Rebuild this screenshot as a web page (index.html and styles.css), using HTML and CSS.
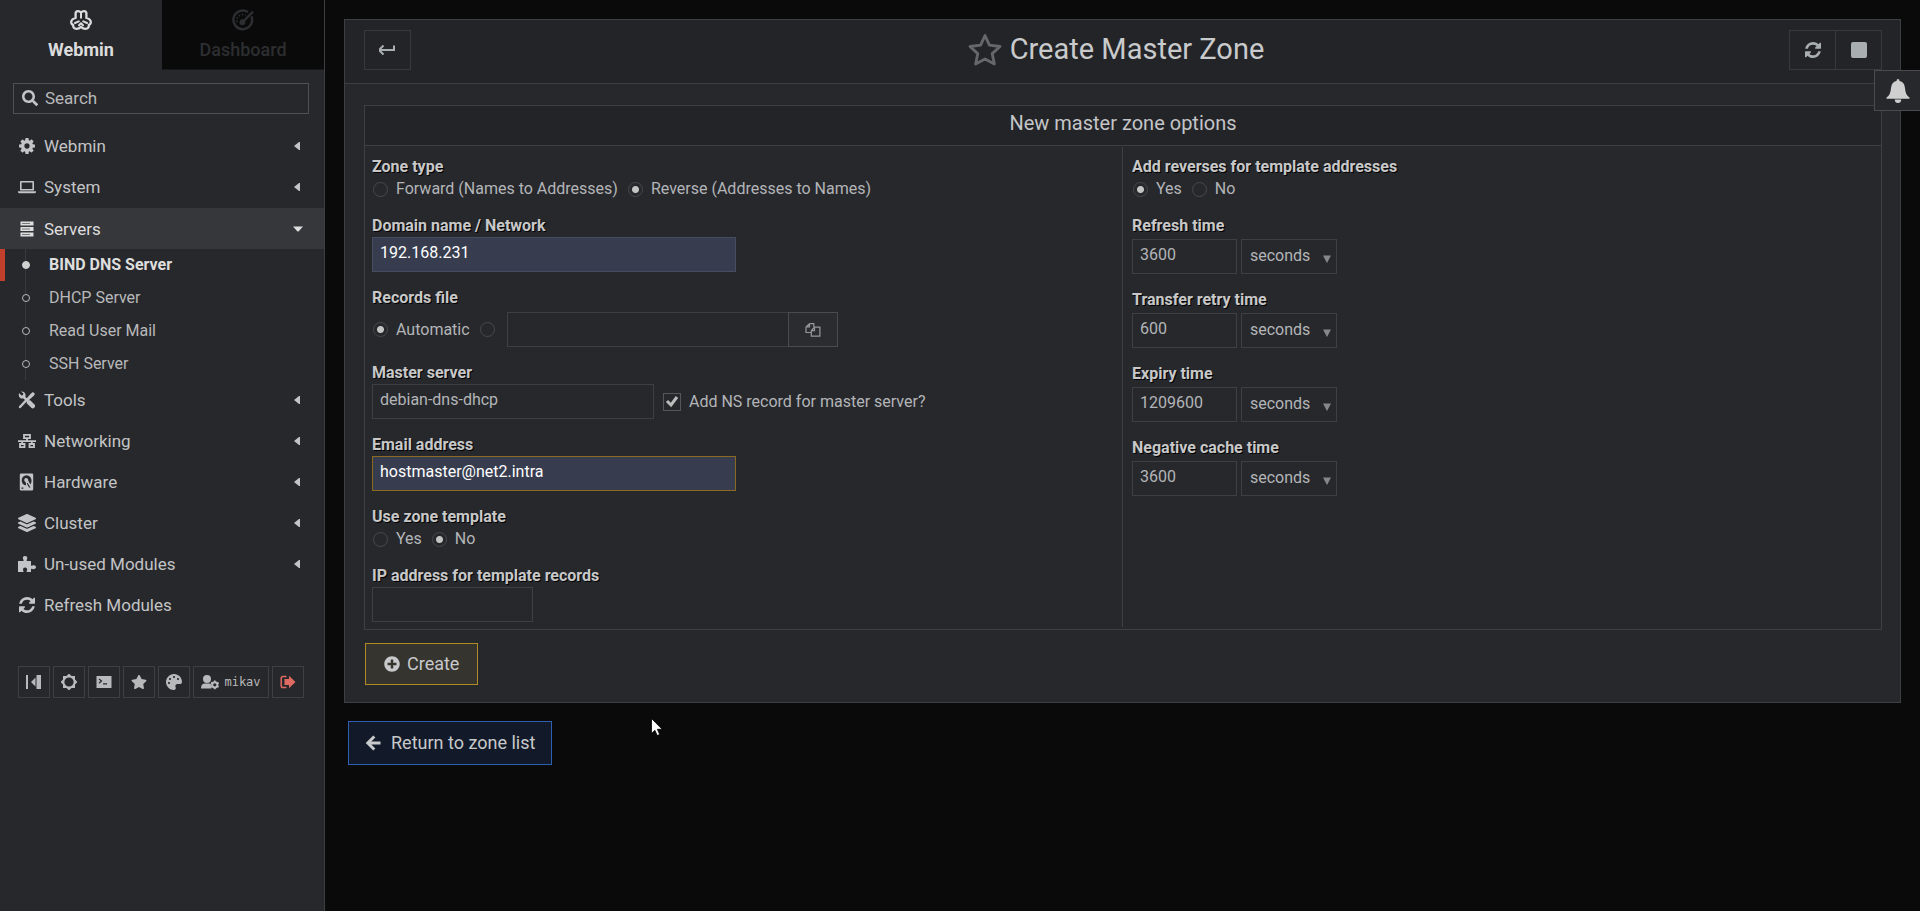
FILE: index.html
```html
<!DOCTYPE html>
<html lang="en">
<head>
<meta charset="utf-8">
<title>Create Master Zone</title>
<link rel="stylesheet" href="styles.css">
</head>
<body>
<svg class="defs" aria-hidden="true">
  <symbol id="refresh" viewBox="0 128 1536 1536"><path d="M1511 1056q0 5-1 7-64 268-268 434.500t-478 166.500q-146 0-282.500-55t-243.500-157l-129 129q-19 19-45 19t-45-19-19-45v-448q0-26 19-45t45-19h448q26 0 45 19t19 45-19 45l-137 137q71 66 161 102t187 36q134 0 250-65t186-179q11-17 53-117 8-23 30-23h192q13 0 22.500 9.500t9.500 22.500zm25-800v448q0 26-19 45t-45 19h-448q-26 0-45-19t-19-45 19-45l138-138q-148-137-349-137-134 0-250 65t-186 179q-11 17-53 117-8 23-30 23h-199q-13 0-22.500-9.500t-9.500-22.500v-7q65-268 270-434.500t480-166.500q146 0 284 55.500t245 156.500l130-129q19-19 45-19t45 19 19 45z"/></symbol>
  <symbol id="caret" viewBox="0 0 6 10"><path d="M6 1v8H5L0 5l5-4z"/></symbol>
  <symbol id="down" viewBox="0 0 10 10"><path d="M1 1.500h8L5 9z"/></symbol>
  <symbol id="star" viewBox="0 0 576 512"><path d="M259.300 17.800L194 150.200 47.900 171.500c-26.200 3.800-36.700 36.100-17.700 54.600l105.700 103-25 145.500c-4.500 26.300 23.200 46 46.400 33.700L288 439.600l130.700 68.700c23.200 12.200 50.900-7.400 46.400-33.700l-25-145.500 105.700-103c19-18.500 8.500-50.800-17.700-54.600L382 150.200 316.700 17.800c-11.700-23.600-45.600-23.900-57.400 0z"/></symbol>
</svg>
<div class="app">
  <aside class="sidebar">
    <nav class="tabs">
      <a class="tab tab-active" href="#">
        <svg class="tab-icon" viewBox="0 0 22 20"><g fill="none" stroke="currentColor" stroke-width="2.300" stroke-linecap="round" stroke-linejoin="round"><path d="M8 1.200Q5.600 1.200 5.600 3.600V8Q1.200 9 1.200 12.300q0 2 2 2.600-.4 3.900 3.400 3.900 2.400 0 4.400-1.900 2 1.900 4.400 1.900 3.800 0 3.400-3.900 2-.6 2-2.600 0-3.300-4.400-4.300V3.600q0-2.400-2.400-2.400-1.800 0-3 1.300-1.200-1.300-3-1.300z"/><path stroke-width="2" d="M11 3v4.800M5 13l3.800-1.600M17 13l-3.800-1.600M9 15.200l2-2 2 2"/></g></svg>
        <span>Webmin</span>
      </a>
      <a class="tab" href="#">
        <svg class="tab-icon" viewBox="0 0 20 20"><g fill="none" stroke="currentColor"><path stroke-width="2.200" d="M14.500 2.800A8.500 8.500 0 1 0 17.600 6.500"/><path stroke-width="2.200" stroke-linecap="round" d="M18.500 3 10 11.500"/><path stroke-width="1.400" stroke-dasharray="1.500 1.500" d="M4.500 12a5.500 5.500 0 0 1 8-6.300"/></g><circle cx="9.500" cy="12" r="2.600" fill="currentColor"/></svg>
        <span>Dashboard</span>
      </a>
    </nav>
    <label class="search">
      <svg class="ic16" viewBox="0 0 512 512"><path d="M505 442.700L405.300 343c-4.500-4.500-10.600-7-17-7H372c27.600-35.300 44-79.700 44-128C416 93.100 322.900 0 208 0S0 93.100 0 208s93.100 208 208 208c48.300 0 92.700-16.400 128-44v16.300c0 6.400 2.500 12.500 7 17l99.700 99.700c9.400 9.400 24.600 9.400 33.900 0l28.300-28.300c9.400-9.400 9.400-24.600.1-34zM208 336c-70.700 0-128-57.200-128-128 0-70.700 57.200-128 128-128 70.700 0 128 57.200 128 128 0 70.700-57.200 128-128 128z"/></svg>
      <input class="search-input" type="text" placeholder="Search" aria-label="Search">
    </label>
    <nav class="menu">
      <a class="menu-row" href="#"><svg class="mi" viewBox="-100 50 1736 1692"><path fill-rule="evenodd" d="M1024 896q0-106-75-181t-181-75-181 75-75 181 75 181 181 75 181-75 75-181zm512-109v222q0 12-8 23t-20 13l-185 28q-19 54-39 91 35 50 107 138 10 12 10 25t-9 23q-27 37-99 108t-94 71q-12 0-26-9l-138-108q-44 23-91 38-16 136-29 186-7 28-36 28h-222q-14 0-24.500-8.500t-11.500-21.500l-28-184q-49-16-90-37l-141 107q-10 9-25 9-14 0-25-11-126-114-165-168-7-10-7-23 0-12 8-23 15-21 51-66.500t54-70.500q-27-50-41-99l-183-27q-13-2-21-12.500t-8-23.500v-222q0-12 8-23t19-13l186-28q14-46 39-92-40-57-107-138-10-12-10-24 0-10 9-23 26-36 98.500-107.500t94.500-71.500q13 0 26 10l138 107q44-23 91-38 16-136 29-186 7-28 36-28h222q14 0 24.500 8.500t11.500 21.500l28 184q49 16 90 37l142-107q9-9 24-9 13 0 25 10 129 119 165 170 7 8 7 22 0 12-8 23-15 21-51 66.500t-54 70.500q26 50 41 98l183 28q13 2 21 12.500t8 23.500z"/></svg><span>Webmin</span><svg class="caret"><use href="#caret"/></svg></a>
      <a class="menu-row" href="#"><svg class="mi" viewBox="0 0 18 18"><path fill-rule="evenodd" d="M3 3h12q1 0 1 1v8.500H2V4q0-1 1-1zm.600 1.600v6.400h10.800V4.600zM0 13.200h18v.8q0 1.200-1.500 1.200h-15Q0 15.200 0 14z"/></svg><span>System</span><svg class="caret"><use href="#caret"/></svg></a>
      <a class="menu-row menu-open" href="#"><svg class="mi" viewBox="0 0 18 18"><path d="M2.500 1.500h13v4h-13zM2.500 7h13v4h-13zM2.500 12.500h13v4h-13z"/><path stroke="#77787b" d="M4 3.500h8M4 9h8M4 14.500h8"/></svg><span>Servers</span><svg class="caret-down" viewBox="0 0 10 6"><path d="M0 .5h10L5.500 5.500h-1z"/></svg></a>
      <ul class="submenu">
        <li><a class="sub sub-active" href="#"><i class="dot"></i>BIND DNS Server</a></li>
        <li><a class="sub" href="#"><i class="dot"></i>DHCP Server</a></li>
        <li><a class="sub" href="#"><i class="dot"></i>Read User Mail</a></li>
        <li><a class="sub" href="#"><i class="dot"></i>SSH Server</a></li>
      </ul>
      <a class="menu-row" href="#"><svg class="mi" viewBox="0 0 18 18"><path fill="none" stroke="currentColor" stroke-width="2.400" stroke-linecap="round" d="M2 16l6-6.500M12 6l3-3"/><path d="M13 2.500 15 1l2 2-1.500 2-5 4.500-2-2zM1 2l2.500 2.500L5 4l.4-1.500L3 .6Q6.500 0 7.500 3.500V6l3.500 3.500 1-.5 5 5q.5 2-1 3-1.500.8-2.500 0l-5-5L9 11 5.500 7.500H3Q0 6 1 2z"/></svg><span>Tools</span><svg class="caret"><use href="#caret"/></svg></a>
      <a class="menu-row" href="#"><svg class="mi" viewBox="0 0 18 18"><path fill="none" stroke="currentColor" stroke-width="1.800" d="M6 2.900h6v3.300H6zM2 12h4.500v3.200H2zM11.500 12H16v3.200h-4.500zM0 9.200h18M9 6v3M4.200 9v3M13.800 9v3"/></svg><span>Networking</span><svg class="caret"><use href="#caret"/></svg></a>
      <a class="menu-row" href="#"><svg class="mi" viewBox="0 0 18 18"><path fill-rule="evenodd" d="M3 .5h11q1.200 0 1.200 1.200v14.600q0 1.200-1.200 1.200H3q-1.200 0-1.200-1.200V1.700Q1.800.5 3 .5zm5.500 1.700a5 5 0 0 0-4.800 5c0 3 2 5 4.500 5l-.6-3.200a2 2 0 1 1 2.600-1.500l2.200 4a5.200 5.200 0 0 0 1.100-4.200 5 5 0 0 0-5-5.100zM3.400 14.500v1.200h2v-1.200zm5.300-4.200 2.300 4.200h1.500L9.700 10z"/></svg><span>Hardware</span><svg class="caret"><use href="#caret"/></svg></a>
      <a class="menu-row" href="#"><svg class="mi" viewBox="0 0 512 512"><path d="M12.410 148.020l232.940 105.670c6.800 3.090 14.490 3.090 21.290 0l232.940-105.670c16.550-7.510 16.550-32.520 0-40.030L266.650 2.310a25.607 25.607 0 0 0-21.290 0L12.410 107.980c-16.550 7.510-16.550 32.530 0 40.040zm487.180 88.280l-58.090-26.330-161.640 73.270c-7.560 3.430-15.590 5.170-23.860 5.170s-16.290-1.740-23.860-5.170L70.510 209.970l-58.100 26.330c-16.550 7.500-16.550 32.500 0 40l232.940 105.590c6.800 3.080 14.490 3.080 21.290 0L499.590 276.300c16.550-7.500 16.550-32.500 0-40zm0 127.800l-57.870-26.230-161.860 73.370c-7.560 3.430-15.590 5.170-23.860 5.170s-16.290-1.740-23.860-5.170L70.290 337.870 12.410 364.100c-16.550 7.500-16.550 32.500 0 40l232.940 105.590c6.800 3.080 14.490 3.080 21.290 0L499.590 404.100c16.550-7.500 16.550-32.500 0-40z"/></svg><span>Cluster</span><svg class="caret"><use href="#caret"/></svg></a>
      <a class="menu-row" href="#"><svg class="mi" viewBox="0 0 18 18"><path d="M0 6h5.500Q6 5 5 4 4.300 1 7 1t2.200 3q-1 1-.4 2H13v4.500q1 .6 2-.2Q18 10 18 12t-3 2.200q-1-.8-2-.2V17H8.700q-.4-1 .4-2 .3-2.500-2-2.500T5 15q.8 1 .4 2H0z"/></svg><span>Un-used Modules</span><svg class="caret"><use href="#caret"/></svg></a>
      <a class="menu-row" href="#"><svg class="mi refresh"><use href="#refresh"/></svg><span>Refresh Modules</span></a>
    </nav>
    <div class="tools">
      <button class="tool" aria-label="Collapse menu"><svg class="ic16" viewBox="0 0 16 16"><path d="M0 1h2v14H0zM9.500 3.500v9L5 8zM10.500 1H15v14h-4.500z"/></svg></button>
      <button class="tool" aria-label="Toggle theme"><svg class="ic16" viewBox="0 0 16 16"><path fill-rule="evenodd" d="M8-.5 10.500 2H14v3.500L16.500 8 14 10.500V14h-3.500L8 16.500 5.500 14H2v-3.500L-.5 8 2 5.500V2h3.500zM8 3.400a4.600 4.600 0 1 0 0 9.200 4.600 4.600 0 0 0 0-9.200z"/></svg></button>
      <button class="tool" aria-label="Terminal"><svg class="ic16" viewBox="0 0 16 16"><path d="M.5 2h15v12H.5z"/><path fill="none" stroke="#27282c" stroke-width="1.200" d="M3 5l2.500 2L3 9.200M7 9.800h4"/></svg></button>
      <button class="tool" aria-label="Favorites"><svg class="ic16"><use href="#star"/></svg></button>
      <button class="tool" aria-label="Theme configuration"><svg class="ic16" viewBox="0 0 512 512"><path d="M204.300 5C104.900 24.400 24.800 104.300 5.200 203.400c-37 187 131.700 326.400 258.800 306.700 41.200-6.400 61.400-54.600 42.500-91.700-23.100-45.400 9.900-98.400 60.900-98.400h79.700c35.800 0 64.800-29.600 64.900-65.300C511.500 97.100 368.100-26.900 204.300 5zM96 320c-17.700 0-32-14.300-32-32s14.300-32 32-32 32 14.300 32 32-14.300 32-32 32zm32-128c-17.700 0-32-14.300-32-32s14.300-32 32-32 32 14.300 32 32-14.300 32-32 32zm128-64c-17.700 0-32-14.300-32-32s14.300-32 32-32 32 14.300 32 32-14.300 32-32 32zm128 64c-17.700 0-32-14.300-32-32s14.300-32 32-32 32 14.300 32 32-14.300 32-32 32z"/></svg></button>
      <button class="tool tool-user"><svg class="user" viewBox="0 0 18 16"><circle cx="6" cy="5" r="4"/><path d="M0 14.500Q0 9.500 4 9.500h4q1 0 2 .7-.5 2 .5 4.300z"/><circle cx="13.800" cy="10.800" r="2.600" fill="none" stroke="currentColor" stroke-width="2"/><path fill="none" stroke="currentColor" stroke-width="1.800" d="M13.800 6.500v2M13.800 13v2.200M10 8.600l1.700 1M15.900 12l1.700 1M10 13l1.700-1M15.900 9.600l1.700-1"/></svg><span>mikav</span></button>
      <button class="tool tool-logout" aria-label="Logout"><svg class="ic16" viewBox="0 0 16 16"><path d="M6.500 5H9V1.800L15.500 8 9 14.200V11H4.500V5z"/><path fill="none" stroke="currentColor" stroke-width="1.500" d="M6.500 2.500H3Q1.200 2.500 1.200 4.300v7.400q0 1.800 1.800 1.800h3.500"/></svg></button>
    </div>
  </aside>
  <main class="main">
    <section class="panel">
      <header class="panel-head">
        <button class="hbtn" aria-label="Back"><svg class="ic18" viewBox="0 0 18 18"><path fill="none" stroke="currentColor" stroke-width="2" d="M15 4.500V9H0M4.500 4.500 0 9l4.500 4.500"/></svg></button>
        <div class="title">
          <svg class="title-star" viewBox="0 0 34 33"><path fill="none" stroke="currentColor" stroke-width="2.800" stroke-linejoin="round" d="M17 2.500l4.400 9.700 10.600 1.300-7.800 7.100 2.200 10.400L17 26l-9.400 5 2.200-10.400L2 13.500l10.600-1.300z"/></svg>
          <h1>Create Master Zone</h1>
        </div>
        <div class="hgroup">
          <button class="hbtn" aria-label="Refresh"><svg class="ic16"><use href="#refresh"/></svg></button>
          <button class="hbtn" aria-label="Stop"><svg class="ic16" viewBox="0 0 16 16"><rect width="16" height="16" rx="2"/></svg></button>
        </div>
      </header>
      <form class="body">
        <div class="box">
          <h2>New master zone options</h2>
          <div class="cols">
            <div class="col">
              <fieldset class="field">
                <legend class="label">Zone type</legend>
                <div class="opts">
                  <label class="opt"><input type="radio" name="type">Forward (Names to Addresses)</label>
                  <label class="opt"><input type="radio" name="type" checked>Reverse (Addresses to Names)</label>
                </div>
              </fieldset>
              <div class="field">
                <label class="label" for="domain">Domain name / Network</label>
                <input class="text w-wide filled" id="domain" type="text" value="192.168.231">
              </div>
              <fieldset class="field">
                <legend class="label">Records file</legend>
                <div class="opts file-row">
                  <label class="opt"><input type="radio" name="file" checked>Automatic</label>
                  <input type="radio" name="file" aria-label="Custom file">
                  <span class="file"><input class="text w-mid" type="text" aria-label="Records file name"><button class="pick" type="button" aria-label="Choose file"><svg class="ic16" viewBox="0 0 16 16"><path fill="none" stroke="currentColor" stroke-width="1.200" d="M4.500 1.600h4.300v3.500M4.500 1.600v3.300H1M4.500 1.600 1 5v5.500h4.800M9.500 5.200h5.400v9H6.300V8.500zM9.500 5.200v3.500H6.300"/></svg></button></span>
                </div>
              </fieldset>
              <div class="field">
                <label class="label" for="master">Master server</label>
                <div class="opts">
                  <input class="text w-mid" id="master" type="text" value="debian-dns-dhcp">
                  <label class="opt"><input type="checkbox" checked>Add NS record for master server?</label>
                </div>
              </div>
              <div class="field">
                <label class="label" for="email">Email address</label>
                <input class="text w-wide filled focus" id="email" type="text" value="hostmaster@net2.intra">
              </div>
              <fieldset class="field">
                <legend class="label">Use zone template</legend>
                <div class="opts">
                  <label class="opt"><input type="radio" name="tpl">Yes</label>
                  <label class="opt"><input type="radio" name="tpl" checked>No</label>
                </div>
              </fieldset>
              <div class="field">
                <label class="label" for="ip">IP address for template records</label>
                <input class="text w-ip" id="ip" type="text">
              </div>
            </div>
            <div class="col col-right">
              <fieldset class="field">
                <legend class="label">Add reverses for template addresses</legend>
                <div class="opts">
                  <label class="opt"><input type="radio" name="rev" checked>Yes</label>
                  <label class="opt"><input type="radio" name="rev">No</label>
                </div>
              </fieldset>
              <div class="field time">
                <label class="label" for="t1">Refresh time</label>
                <div class="pair"><input class="text w-num" id="t1" type="text" value="3600"><span class="sel"><select aria-label="Refresh unit"><option>seconds</option></select><svg><use href="#down"/></svg></span></div>
              </div>
              <div class="field time">
                <label class="label" for="t2">Transfer retry time</label>
                <div class="pair"><input class="text w-num" id="t2" type="text" value="600"><span class="sel"><select aria-label="Retry unit"><option>seconds</option></select><svg><use href="#down"/></svg></span></div>
              </div>
              <div class="field time">
                <label class="label" for="t3">Expiry time</label>
                <div class="pair"><input class="text w-num" id="t3" type="text" value="1209600"><span class="sel"><select aria-label="Expiry unit"><option>seconds</option></select><svg><use href="#down"/></svg></span></div>
              </div>
              <div class="field time">
                <label class="label" for="t4">Negative cache time</label>
                <div class="pair"><input class="text w-num" id="t4" type="text" value="3600"><span class="sel"><select aria-label="Cache unit"><option>seconds</option></select><svg><use href="#down"/></svg></span></div>
              </div>
            </div>
          </div>
        </div>
        <button class="create" type="button"><svg class="ic16" viewBox="0 0 512 512"><path d="M256 8C119 8 8 119 8 256s111 248 248 248 248-111 248-248S393 8 256 8zm144 276c0 6.600-5.400 12-12 12h-92v92c0 6.600-5.400 12-12 12h-56c-6.600 0-12-5.400-12-12v-92h-92c-6.600 0-12-5.400-12-12v-56c0-6.600 5.400-12 12-12h92v-92c0-6.600 5.400-12 12-12h56c6.600 0 12 5.400 12 12v92h92c6.600 0 12 5.400 12 12v56z"/></svg>Create</button>
      </form>
    </section>
    <a class="return" href="#"><svg class="ic16" viewBox="0 0 16 16"><path fill="none" stroke="currentColor" stroke-width="3" d="M15.500 8H3M9.300 1.500 2.800 8l6.500 6.500"/></svg>Return to zone list</a>
  </main>
</div>
<button class="bell" aria-label="Notifications"><svg viewBox="0 0 24 24"><path d="M12 0q1.500 0 1.500 2 5 1 5.500 7 .3 7 4.500 9.500v1.300H.5v-1.300Q4.700 16 5 9q.5-6 5.500-7 0-2 1.500-2zM8.700 20.500h6.600Q15 24 12 24t-3.300-3.500z"/></svg></button>
<svg class="cursor" viewBox="0 0 12 18" aria-hidden="true"><path fill="#fff" stroke="#000" stroke-width=".8" d="M.5.500v15l3.400-3.200 2.300 5.200 2.500-1-2.300-5.200h4.800z"/></svg>
</body>
</html>
```

FILE: styles.css
```css
* { box-sizing: border-box; }
body { margin: 0; background: #0a0a0a; color: #b3b5b8; font: 16px/22px Roboto, "Liberation Sans", sans-serif; }
button, input, select { font: inherit; color: inherit; margin: 0; }
button { background: none; border: 1px solid #3e3f43; padding: 0; display: flex; align-items: center; justify-content: center; }
a { color: inherit; text-decoration: none; }
svg { fill: currentColor; flex: none; display: block; }
h1, h2 { margin: 0; font-weight: 400; }
.defs { position: absolute; width: 0; height: 0; }
.ic16 { width: 16px; height: 16px; }
.ic18 { width: 18px; height: 18px; }

.app { display: flex; min-height: 100vh; }
.sidebar { width: 325px; flex: none; background: #27282c; border-right: 1px solid #3e3f43; color: #c3c4c5; -webkit-font-smoothing: antialiased; }
.tabs { display: grid; grid-template-columns: 1fr 1fr; height: 70px; }
.tab { display: flex; flex-direction: column; align-items: center; gap: 8px; padding-top: 9px; background: #0a0a0a; color: #2d2e31; font-size: 18px; font-weight: 500; border-bottom: 1px solid #17181a; }
.tab-active { background: none; color: #dcdcdc; border-bottom-color: transparent; font-weight: 700; }
.tab-icon { width: 22px; height: 22px; }
.search { display: flex; align-items: center; gap: 7px; margin: 13px 15px 12px 13px; height: 31px; padding: 0 0 2px 8px; border: 1px solid #505155; }
.search-input { flex: 1; min-width: 0; border: 0; outline: 0; padding: 0; background: none; font-size: 17px; }
.search-input::placeholder { color: #b8b9ba; opacity: 1; }
.menu-row { display: flex; align-items: center; height: 41px; padding: 0 24px 2px 18px; font-size: 17px; }
.menu-row span { flex: 1; margin-left: 8px; }
.menu-open { background: #36373b; color: #dedede; padding-right: 21px; padding-bottom: 0; }
.mi { width: 18px; height: 18px; }
.refresh { padding: 1px; }
.caret { width: 6px; height: 10px; }
.caret-down { width: 10px; height: 6px; }
.submenu { list-style: none; margin: 0; padding: 0; display: grid; gap: 1px; background: linear-gradient(#38393d, #38393d) 25px 0 / 1px 100% no-repeat; }
.sub { display: flex; align-items: center; height: 32px; padding-left: 22px; border-left: 0 solid #c0402b; color: #b8b9ba; }
.sub-active { border-left-width: 5px; padding-left: 17px; color: #dedede; font-weight: 700; }
.dot { width: 8px; height: 8px; border: 1px solid #b8b9ba; border-radius: 50%; margin-right: 19px; background: #27282c; }
.sub-active .dot { background: #d0d0d0; border-color: #d0d0d0; }
.tools { display: flex; gap: 3px; margin: 40px 20px 0 18px; }
.tool { width: 32px; height: 32px; color: #b8b9ba; }
.tool-user { width: auto; flex: 1; gap: 5px; font: 12px/20px "DejaVu Sans Mono", monospace; }
.user { width: 18px; height: 16px; }
.tool-logout { color: #df6a62; }

.main { flex: 1; min-width: 0; padding: 19px 19px 0; }
.panel { border: 1px solid #3e3f43; background: #27282c; }
.panel-head { display: grid; grid-template-columns: 1fr auto 1fr; align-items: start; padding: 10px 18px 13px 19px; background: #232427; border-bottom: 1px solid #3e3f43; }
.hbtn { width: 47px; height: 40px; color: #a9aeb1; border-color: #38393d; }
.hgroup { display: flex; justify-self: end; }
.hbtn + .hbtn { margin-left: -1px; }
.title { display: flex; align-items: center; gap: 8px; padding-right: 14px; color: #c8cacc; }
.title-star { width: 34px; height: 33px; color: #66676a; }
h1 { font-size: 29px; line-height: 38px; }
.body { padding: 21px 18px 17px 19px; }
.box { border: 1px solid #3e3f43; }
h2 { font-size: 20px; line-height: 35px; height: 40px; text-align: center; background: #232427; border-bottom: 1px solid #3e3f43; color: #c3c5c7; }
.cols { display: grid; grid-template-columns: 1fr 1fr; padding: 1px 0 2px; }
.col { padding: 9px 7px 5px; }
.col-right { border-left: 1px solid #3e3f43; padding-left: 9px; margin-left: -1px; }
.field { margin: 0 0 15px; padding: 0; border: 0; min-width: 0; }
.field:last-child { margin-bottom: 0; }
.label { display: block; padding: 0; font-weight: 700; color: #c8c8c8; text-shadow: 1px 1px 0 #000; }
.opts { display: flex; align-items: center; gap: 9px; }
.opt { display: flex; align-items: center; gap: 8px; }
.opts .file { margin-left: 3px; }
.file-row { margin-top: 3px; }
input[type=radio] { appearance: none; width: 15px; height: 15px; margin: 0 0 0 1px; border: 1px solid #48494d; border-radius: 50%; }
input[type=radio]:checked { background: radial-gradient(circle, #c4c4c4 3px, transparent 4px); }
input[type=checkbox] { appearance: none; width: 18px; height: 18px; border: 1px solid #55565a; background: url("data:image/svg+xml,%3Csvg xmlns='http://www.w3.org/2000/svg' viewBox='0 0 16 16'%3E%3Cpath fill='none' stroke='%23bbb' stroke-width='3' d='M3 7l4 4 6-8'/%3E%3C/svg%3E"); }
.text { display: block; height: 35px; padding: 0 8px 4px 7px; background: none; border: 1px solid #3e3f43; border-radius: 0; outline: 0; }
.w-wide { width: 364px; }
.w-mid { width: 282px; }
.w-ip { width: 161px; }
.w-num { width: 105px; }
.filled { background: #373d4f; border-color: #474d60; color: #fff; }
.focus { border-color: #8a6a20; }
.file { display: flex; }
.pick { width: 50px; height: 35px; background: #2b2c30; border-color: #4a4b4f; margin-left: -1px; color: #95979a; }
.time .pair { display: flex; gap: 4px; margin-top: 2px; }
.sel { display: grid; width: 96px; }
.sel > * { grid-area: 1 / 1; }
.sel svg { width: 10px; height: 10px; place-self: center end; margin: 4px 5px 0 0; color: #85878a; pointer-events: none; }
select { appearance: none; height: 35px; width: 100%; padding: 0 8px 2px; background: none; border: 1px solid #3e3f43; border-radius: 0; }
.create, .return { display: inline-flex; align-items: center; font-size: 18px; color: #c8c9ca; }
.create { height: 42px; margin: 13px 0 0 1px; padding: 0 18px; gap: 7px; background: #35342e; border: 1px solid #b08a24; }
.return { height: 44px; margin: 18px 0 0 4px; padding: 0 16px; gap: 10px; background: #121a2a; border: 1px solid #2f5fb0; }

.bell { position: absolute; top: 70px; right: 0; width: 46px; height: 41px; background: #27282c; border: 1px solid #4a4b4f; border-right: 0; color: #cfcfcf; }
.bell svg { width: 24px; height: 24px; }
.cursor { position: absolute; left: 651px; top: 718px; width: 12px; height: 18px; }
```
